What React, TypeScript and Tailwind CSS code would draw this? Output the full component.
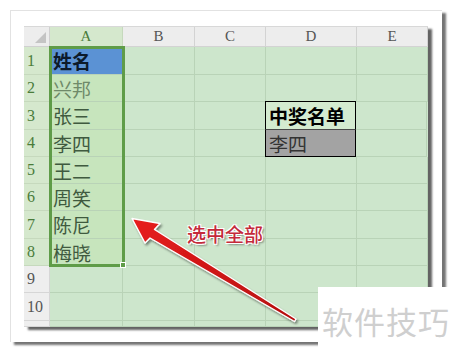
const cols = [
  { key: "A", w: "w-[73px]" },
  { key: "B", w: "w-[72px]" },
  { key: "C", w: "w-[71px]" },
  { key: "D", w: "w-[91px]" },
  { key: "E", w: "w-[71px]" },
];

const rowHeights = ["h-[28px]", "h-[27px]", "h-[28px]", "h-[27px]", "h-[27px]", "h-[27px]", "h-[28px]", "h-[27px]", "h-[27px]", "h-[28px]", "h-[6px]"];

const names = ["姓名", "兴邦", "张三", "李四", "王二", "周笑", "陈尼", "梅晓"];

const cjk = { fontFamily: '"Noto Sans CJK SC", "Noto Sans", sans-serif' };
const serif = { fontFamily: '"Liberation Serif", "DejaVu Serif", serif' };

function Cell({ row, col }: { row: number; col: string }) {
  const base = "shrink-0 border-r border-b border-[#b9d3b7] flex items-center pl-[3px] text-[19px] leading-none";
  const w = cols.find((c) => c.key === col)!.w;

  if (col === "A" && row === 1) {
    return (
      <div className={`${base} ${w} bg-[#5b92d4] font-bold text-[#0d1a2a]`} style={cjk}>
        姓名
      </div>
    );
  }
  if (col === "A" && row <= 8) {
    return (
      <div className={`${base} ${w} bg-[#c7e5bd] ${row === 2 ? "text-[#6f8a69]" : "text-[#3f5a3f]"}`} style={cjk}>
        {names[row - 1]}
      </div>
    );
  }
  if (col === "D" && row === 3) {
    return (
      <div className={`${base} ${w} bg-[#d4ebd0] font-bold text-black border-l border-t border-r-black border-b-[#4a4a4a] border-l-black border-t-black -ml-px -mt-px`} style={cjk}>
        中奖名单
      </div>
    );
  }
  if (col === "D" && row === 4) {
    return (
      <div className={`${base} ${w} bg-[#a3a3a3] text-[#333] border-l border-l-black border-r-black border-b-black -ml-px`} style={cjk}>
        李四
      </div>
    );
  }
  return <div className={`${base} ${w} bg-[#cde6cc]`} />;
}

export default function App() {
  return (
    <div className="relative w-[454px] h-[354px] bg-white overflow-hidden">
      <div className="pt-[10px] pl-[10px]">
        <div className="w-[432px] h-[332px] bg-white border-t border-l border-[#e2e2e2] shadow-[4px_3px_2px_rgba(70,70,70,0.75)] pt-[15px] pl-[13px]">
          <div className="w-[404px] h-[301px] bg-[#cde6cc] overflow-hidden shadow-[4px_3px_2px_rgba(60,60,60,0.8)] border-t border-[#d8d8d8]">
            {/* header */}
            <div className="flex h-[20px]">
              <div className="w-[26px] shrink-0 bg-[#ededed] border-r border-b border-[#d0d0d0] relative">
                <div className="absolute right-[3px] bottom-[3px] w-0 h-0 border-l-[11px] border-l-transparent border-b-[11px] border-b-[#c4c4c4]" />
              </div>
              {cols.map((c) => (
                <div
                  key={c.key}
                  className={`${c.w} shrink-0 flex items-center justify-center text-[15px] border-r border-b ${
                    c.key === "A" ? "bg-[#d5e8cd] text-[#4a7c3a] border-[#c6d9bd]" : "bg-[#ededed] text-[#555] border-[#d3d3d3]"
                  }`}
                  style={serif}
                >
                  {c.key}
                </div>
              ))}
            </div>
            {rowHeights.map((h, i) => {
              const row = i + 1;
              const sel = row <= 8;
              return (
                <div key={row} className={`flex ${h}`}>
                  <div
                    className={`w-[26px] shrink-0 flex items-center pl-[3px] text-[16px] border-r border-b ${
                      sel ? "bg-[#d5e8cd] text-[#4a7c3a] border-[#c6d9bd]" : "bg-[#eeeeee] text-[#555] border-[#d6d6d6]"
                    }`}
                    style={serif}
                  >
                    {row <= 10 ? row : ""}
                  </div>
                  {cols.map((c) => (
                    <Cell key={c.key} row={row} col={c.key} />
                  ))}
                </div>
              );
            })}
          </div>
        </div>
      </div>

      {/* selection outline over column A */}
      <div className="absolute left-[49px] top-[46px] w-[76px] h-[221px] border-[3px] border-[#5f9c48]" />
      <div className="absolute left-[120px] top-[262px] w-[6px] h-[6px] bg-[#5f9c48] border border-white" />

      {/* arrow */}
      <svg className="absolute left-0 top-0" width="454" height="354" viewBox="0 0 454 354">
        <defs>
          <linearGradient id="ar" x1="0" y1="0" x2="1" y2="1">
            <stop offset="0" stopColor="#e81e1e" />
            <stop offset="1" stopColor="#b50f0f" />
          </linearGradient>
          <filter id="sh" x="-10%" y="-10%" width="130%" height="130%">
            <feDropShadow dx="1.5" dy="2" stdDeviation="1.2" floodColor="#000" floodOpacity="0.45" />
          </filter>
        </defs>
        <polygon
          points="132,218.5 160,223.5 154.5,229.5 296,319 294.5,321.5 150,238 145,243"
          fill="url(#ar)"
          stroke="#ffffff"
          strokeWidth="1.4"
          strokeLinejoin="round"
          filter="url(#sh)"
        />
      </svg>

      <div
        className="absolute left-[187px] top-[224px] text-[19px] leading-none font-medium text-[#c42a3a] [text-shadow:1px_1px_0_#fff,-1px_-1px_0_#fff,1px_-1px_0_#fff,-1px_1px_0_#fff,2px_2px_2px_rgba(0,0,0,0.4)]"
        style={cjk}
      >
        选中全部
      </div>

      {/* watermark */}
      <div className="absolute left-[318px] top-[287px] w-[136px] h-[67px] bg-white flex items-center pl-[4px]">
        <span className="text-[31px] leading-none text-[#cfcfcf] tracking-[1px]" style={cjk}>
          软件技巧
        </span>
      </div>
    </div>
  );
}
